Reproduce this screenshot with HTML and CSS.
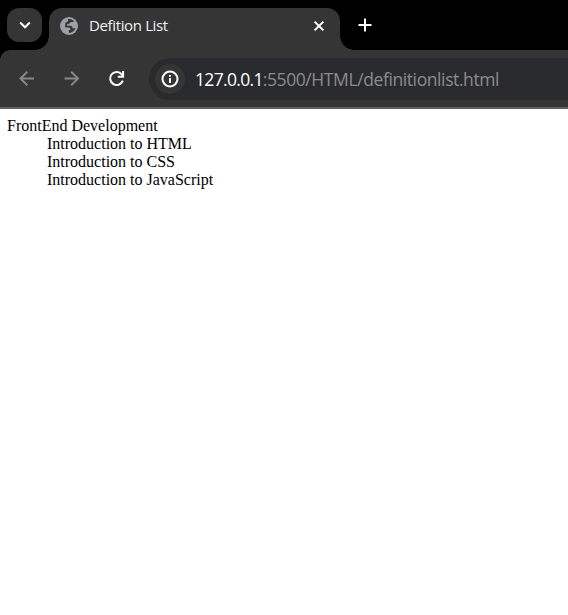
FILE: index.html
```html
<!DOCTYPE html>
<html lang="en">
<head>
<meta charset="utf-8">
<title>Defition List</title>
<link rel="stylesheet" href="styles.css">
</head>
<body>
<header class="browser">
  <div class="tabstrip">
    <button class="tab-search" aria-label="Search tabs">
      <svg width="35" height="34" viewBox="0 0 35 34"><path class="line bright" d="M13.2 14.5l4.8 4.8 4.8-4.8"/></svg>
    </button>
    <div class="tab">
      <svg class="globe" width="20" height="20" viewBox="0 0 20 20">
        <circle cx="10" cy="10" r="9"/>
        <path class="cut" d="M9 3.1C11 2.8 13 3.3 14.6 4.7V6H11.8C11.2 6 11 7.4 10.3 7.6L8.2 8.2V9.7H11.2C12.8 9.7 13.6 10.6 13.6 12.2H16.4C15.4 15 13 16.8 9.8 17V13.9H11.2V12.2C10.9 11.7 10.2 11.4 9.2 11.4H6.2V7.4C6.2 6.8 6.8 6.4 7.6 6.2L9 5.2Z"/>
      </svg>
      <span class="tab-title">Defition List</span>
      <svg class="close" width="14" height="14" viewBox="0 0 14 14"><path class="line bright" d="M2.6 2.6l8.8 8.8M11.4 2.6l-8.8 8.8"/></svg>
    </div>
    <svg class="new-tab" width="16" height="16" viewBox="0 0 16 16"><path class="line bright" d="M8 1.5v13M1.5 8h13"/></svg>
  </div>
  <div class="toolbar">
    <svg class="nav" width="20" height="20" viewBox="0 0 20 20"><path class="line muted" d="M17 9.5H3.7M10.3 2.7L3.5 9.5l6.8 6.8"/></svg>
    <svg class="nav" width="20" height="20" viewBox="0 0 20 20"><path class="line muted" d="M2.5 9.5h13.3M9.2 2.7l6.8 6.8-6.8 6.8"/></svg>
    <svg class="nav" width="20" height="20" viewBox="0 0 20 20"><path class="line bright" d="M15.8 11.6A6.5 6.5 0 1 1 14.8 5.5L15.8 7M16.1 2v5.7H10.8"/></svg>
    <div class="address">
      <span class="info"><svg width="20" height="20" viewBox="0 0 20 20"><circle class="line bright" cx="10" cy="10" r="7.5"/><path class="line bright" d="M10 9v5M10 6v1.8"/></svg></span>
      <span class="url"><span class="host">127.0.0.1</span>:5500/HTML/definitionlist.html</span>
    </div>
  </div>
</header>
<main class="page">
  <dl>
    <dt>FrontEnd Development</dt>
    <dd>Introduction to HTML</dd>
    <dd>Introduction to CSS</dd>
    <dd>Introduction to JavaScript</dd>
  </dl>
</main>
</body>
</html>
```
FILE: styles.css
```css
* { box-sizing: border-box; }
body { margin: 0; background: #fff; overflow: hidden; }
svg { display: block; flex: none; }
.line { fill: none; stroke-width: 2; }
.bright { stroke: #fff; }
.muted { stroke: #878787; }
.browser { font-family: "Open Sans", "Noto Sans", sans-serif; }
.tabstrip {
  display: flex;
  height: 50px;
  padding: 8px 0 0 7px;
  background: #000;
}
.tab-search {
  width: 35px;
  height: 34px;
  padding: 0;
  border: 0;
  border-radius: 12px;
  background: #353535;
}
.tab {
  position: relative;
  display: flex;
  align-items: center;
  width: 291px;
  height: 42px;
  margin-left: 7px;
  padding: 0 14px 7px 10px;
  border-radius: 13px 13px 0 0;
  background: #353535;
}
.tab::before, .tab::after {
  content: "";
  position: absolute;
  bottom: 0;
  width: 14px;
  height: 14px;
}
.tab::before { right: 100%; background: radial-gradient(circle at 0 0, transparent 13.5px, #353535 14px); }
.tab::after { left: 100%; background: radial-gradient(circle at 100% 0, transparent 13.5px, #353535 14px); }
.globe { fill: #9aa0a6; }
.globe .cut { fill: #353535; }
.tab-title {
  flex: 1;
  margin: -2px 0 0 10px;
  color: #f1f1f1;
  font-size: 15px;
  line-height: 20px;
  letter-spacing: -0.36px;
  white-space: nowrap;
}
.new-tab { margin: 9px 0 0 17px; }
.toolbar {
  display: flex;
  align-items: center;
  height: 59px;
  padding: 0 0 0 17px;
  border-bottom: 2px solid #5f5d5d;
  background: radial-gradient(circle at 100% 100%, #353535 9.5px, #000 10px) 0 0 / 10px 10px no-repeat, #353535;
}
.nav { margin-right: 25px; }
.nav:nth-child(3) { margin-right: 22px; }
.address {
  display: flex;
  align-items: center;
  flex: 1;
  height: 42px;
  margin-top: 1px;
  padding-left: 6px;
  border-radius: 21px 0 0 21px;
  background: #292a2d;
}
.info {
  display: grid;
  place-items: center;
  width: 30px;
  height: 30px;
  border-radius: 50%;
  background: #353535;
}
.url {
  margin-left: 10px;
  color: #8c8c8c;
  font-size: 17.5px;
  line-height: 24px;
  letter-spacing: -0.4px;
  white-space: nowrap;
}
.host { color: #fff; letter-spacing: -0.68px; }
.page {
  padding: 8px 7px;
  color: #000;
  font: 16px/18px "Liberation Serif", "Times New Roman", serif;
}
dl { margin: 0; }
dd { margin-left: 40px; }
```
